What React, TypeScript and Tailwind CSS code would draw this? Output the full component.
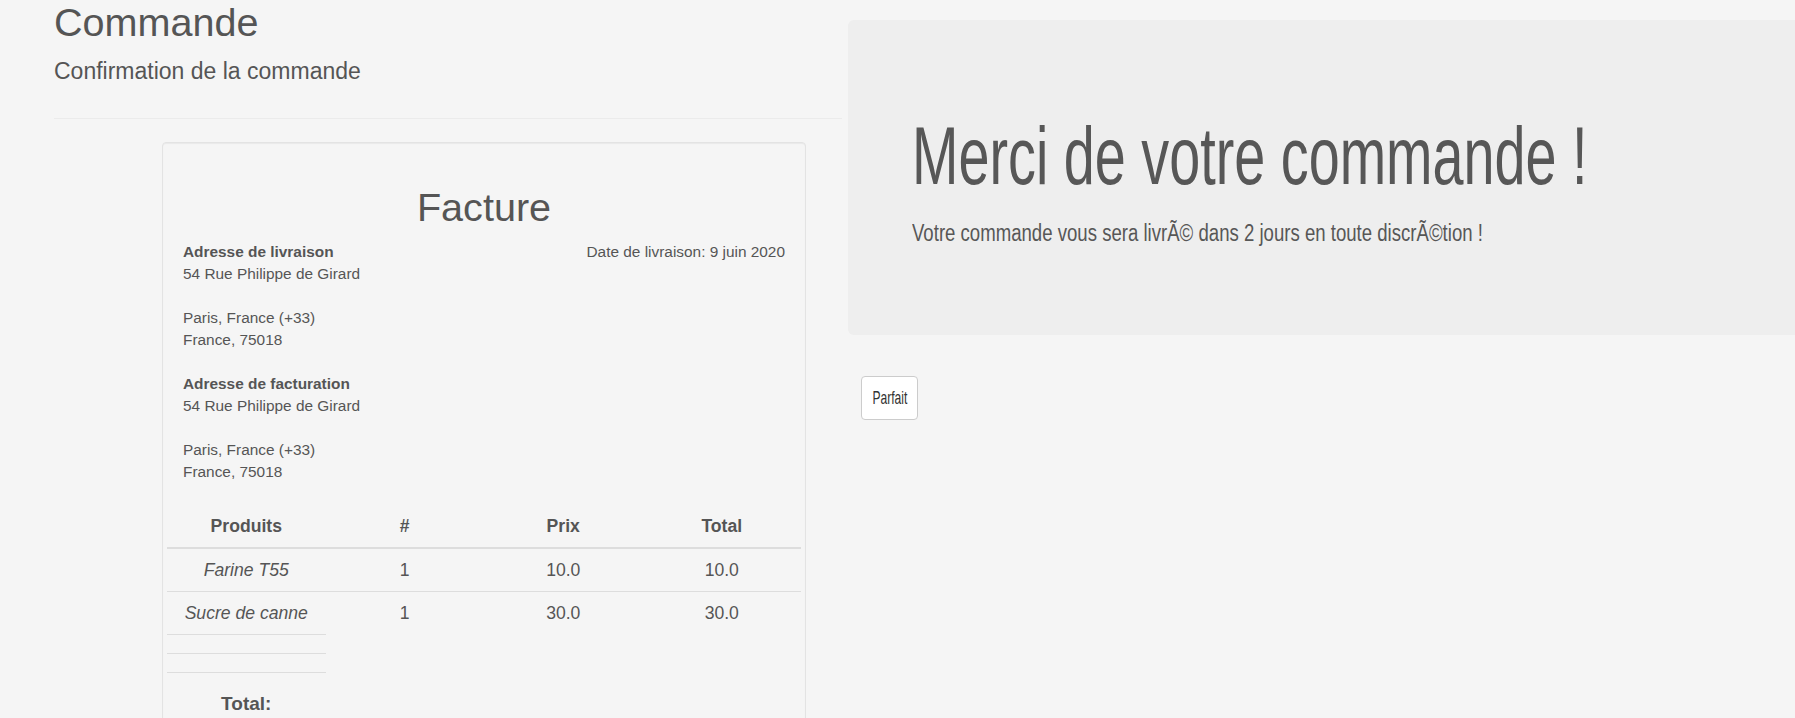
const lignes = [
  { produit: "Farine T55", qte: 1, prix: "10.0", total: "10.0" },
  { produit: "Sucre de canne", qte: 1, prix: "30.0", total: "30.0" },
];

const Adresse = ({ titre }: { titre: string }) => (
  <div className="mb-[22px]">
    <div className="font-bold">{titre}</div>
    <div>54 Rue Philippe de Girard</div>
    <div className="h-[22px]" />
    <div>Paris, France (+33)</div>
    <div>France, 75018</div>
  </div>
);

const App = () => {
  return (
    <div
      className="h-screen overflow-hidden bg-[#f5f5f5] text-[#555]"
      style={{ fontFamily: '"Liberation Sans", Arial, sans-serif' }}
    >
      <div className="flex">
        {/* Colonne gauche */}
        <div className="w-[848px] shrink-0 pl-[54px] pr-[6px]">
          <h1 className="text-[39.6px] leading-[44px]">Commande</h1>
          <p className="mt-[15px] text-[23px] leading-[25px]">Confirmation de la commande</p>
          <hr className="mt-[34px] border-t border-[#ebebeb]" />

          {/* Facture */}
          <div className="ml-[108px] mt-[23px] w-[644px] rounded-[4px] border border-[#e3e3e3] bg-[#f5f5f5] px-[20px] pt-[43px] pb-[40px] text-[15.4px] leading-[22px] shadow-[inset_0_1px_1px_rgba(0,0,0,0.05)]">
            <h1 className="mb-[11px] text-center text-[39.6px] leading-[43.6px]">Facture</h1>
            <div className="flex justify-between">
              <Adresse titre="Adresse de livraison" />
              <div>Date de livraison: 9 juin 2020</div>
            </div>
            <Adresse titre="Adresse de facturation" />

            <div className="-mx-[16px] text-[17.6px]">
              <div className="grid grid-cols-4 border-b-2 border-[#ddd] text-center font-bold">
                <div className="py-[10px]">Produits</div>
                <div className="py-[10px]">#</div>
                <div className="py-[10px]">Prix</div>
                <div className="py-[10px]">Total</div>
              </div>
              {lignes.map((l, i) => (
                <div
                  key={l.produit}
                  className={`grid grid-cols-4 text-center ${i === 0 ? "border-b border-[#ddd]" : ""}`}
                >
                  <div className="py-[10px] italic">{l.produit}</div>
                  <div className="py-[10px]">{l.qte}</div>
                  <div className="py-[10px]">{l.prix}</div>
                  <div className="py-[10px]">{l.total}</div>
                </div>
              ))}
              <div className="h-[19px] w-1/4 border-t border-[#ddd]" />
              <div className="h-[19px] w-1/4 border-t border-[#ddd]" />
              <div className="w-1/4 border-t border-[#ddd] pt-[20px] text-center">
                <h4 className="text-[19px] font-bold leading-[21px]">Total:</h4>
              </div>
            </div>
          </div>
        </div>

        {/* Colonne droite */}
        <div className="flex-1 pt-[20px]">
          <div className="h-[315px] rounded-l-[6px] bg-[#eee] pl-[64px] pt-[91px] text-[#575757]">
            <h1 className="origin-left scale-x-[0.68] whitespace-nowrap text-[82px] leading-[90px]">
              Merci de votre commande !
            </h1>
            <p className="mt-[15px] origin-left scale-x-[0.753] whitespace-nowrap text-[24.7px] leading-[34.6px]">
              Votre commande vous sera livrÃ© dans 2 jours en toute discrÃ©tion !
            </p>
          </div>
          <button className="ml-[13px] mt-[41px] flex h-[44px] w-[57px] items-center justify-center rounded-[4px] border border-[#ccc] bg-white text-[#333]">
            <span className="inline-block scale-x-[0.65] whitespace-nowrap text-[18.6px]">Parfait</span>
          </button>
        </div>
      </div>
    </div>
  );
};

export default App;
